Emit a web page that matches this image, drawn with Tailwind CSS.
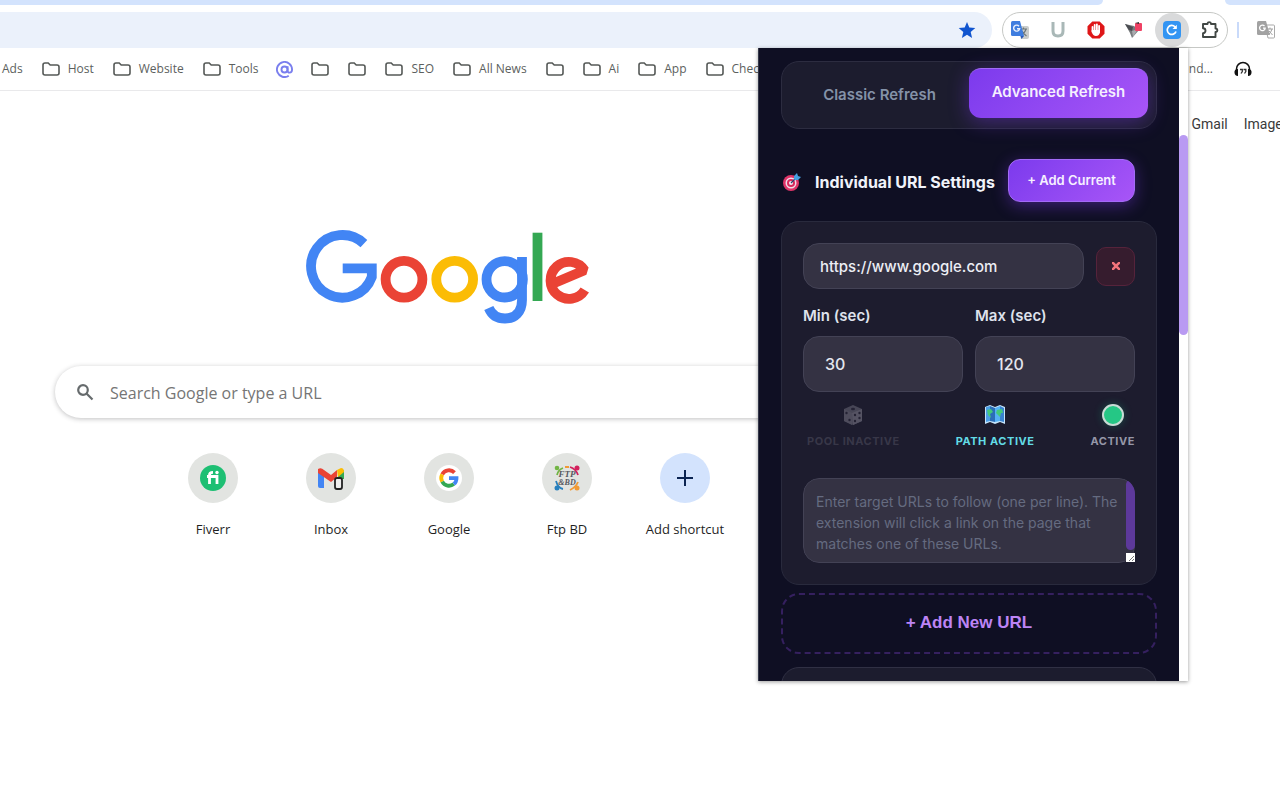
<!DOCTYPE html>
<html lang="en">
<head>
<meta charset="utf-8">
<meta name="viewport" content="width=device-width, initial-scale=1">
<title>New Tab</title>
<script src="https://cdn.jsdelivr.net/npm/@tailwindcss/browser@4"></script>
</head>
<body class="relative min-h-screen overflow-hidden bg-white font-['Open_Sans',sans-serif] text-[#1f1f1f]">
<svg class="hidden" aria-hidden="true">
  <symbol id="folder" viewBox="0 0 18 14"><path d="M1 3Q1 1 3 1H6.2L8.2 3H15Q17 3 17 5V11Q17 13 15 13H3Q1 13 1 11Z" fill="none" stroke="#555957" stroke-width="1.6"/></symbol>
</svg>

<!-- Browser chrome -->
<header>
  <div class="flex h-[5px] bg-white">
    <div class="flex-1 rounded-br-lg bg-[#d3e3fd]"></div>
    <div class="w-[122px]"></div>
    <div class="w-[55px] rounded-bl-lg bg-[#d3e3fd]"></div>
  </div>
  <div class="mt-[7px] flex h-9 items-center">
    <div class="flex h-9 flex-1 items-center justify-end rounded-r-full bg-[#ebf1fb] pr-4">
      <button aria-label="Bookmark this tab" class="block"><svg class="block size-[18px]" viewBox="0 0 18 18"><path d="M9 1L11.3 6.6L17.3 7.1L12.7 11L14.1 17L9 13.8L3.9 17L5.3 11L.7 7.1L6.7 6.6Z" fill="#1155cf"/></svg></button>
    </div>
    <div class="ml-[10px] flex h-9 w-[226px] items-center rounded-full border border-[#c6c8c5] pl-1">
      <button aria-label="Translate" class="mr-3 grid w-[26px] place-items-center"><svg class="size-[18px]" viewBox="0 0 18 18"><path d="M7 5H16Q18 5 18 7V16Q18 18 16 18H10Z" fill="#c9cccb"/><path d="M9 8H16M12.5 6.5V8M15 8Q14 12 9.5 14.500M11 10Q12.500 13 15.500 15" stroke="#6c7679" stroke-width="1.200" fill="none"/><path d="M1.500 0H9L13 15H1.500Q0 15 0 13.500V1.500Q0 0 1.500 0Z" fill="#3f7ddf"/><path d="M9.500 15H13L10.500 18Z" fill="#2856b5"/><path d="M8 5.200A3 3 0 1 0 8.600 7.800H6" stroke="#e8effc" stroke-width="1.400" fill="none"/></svg></button>
      <button aria-label="U extension" class="mr-3 grid w-[26px] place-items-center"><svg class="h-4 w-[14px]" viewBox="0 0 14 16"><path d="M2 0V9Q2 14 7 14T12 9V0" fill="none" stroke="#a9b8b7" stroke-width="3"/></svg></button>
      <button aria-label="Ad blocker" class="mr-3 grid w-[26px] place-items-center"><svg class="size-[18px]" viewBox="0 0 18 18"><path d="M5.300 .5H12.700L17.500 5.300V12.700L12.700 17.500H5.300L.5 12.700V5.300Z" fill="#df1618"/><path d="M5.500 6V10.500M7.700 3.800V10M9.900 3.300V10M12.100 4.800V11" stroke="#fff" stroke-width="1.800" stroke-linecap="round"/><path d="M4.700 9H13V11Q12.500 15 8.900 15Q6 15 4.700 11Z" fill="#fff"/></svg></button>
      <button aria-label="Fox extension" class="mr-3 grid w-[26px] place-items-center"><svg class="h-4 w-[18px]" viewBox="0 0 18 16"><path d="M0 2L9 4L14 8L7 16L5 11Z" fill="#777b7e"/><path d="M0 2L8 5L7 9L4 8Z" fill="#4b4d51"/><path d="M7 9L13 7L8 15Z" fill="#a9abae"/><rect x="10" y="1" width="7" height="8" rx="1" fill="#ef4164"/><path d="M10 1L14 0V2Z" fill="#333"/></svg></button>
      <button aria-label="Auto refresh" class="mr-1 -ml-1 grid size-[34px] place-items-center rounded-full bg-[#d9dadb]"><svg class="size-[18px]" viewBox="0 0 18 18"><rect width="18" height="18" rx="4" fill="#3395f3"/><path d="M13 10.500A4.500 4.500 0 1 1 12 5.800L13 6.800" fill="none" stroke="#fff" stroke-width="1.700"/><path d="M13.800 3.700V8H9.500Z" fill="#fff"/></svg></button>
      <button aria-label="Extensions" class="ml-1 grid w-[26px] place-items-center"><svg class="size-5" viewBox="0 0 20 20"><path d="M3 4H7.500V3.500A1.800 1.800 0 0 1 11 3.500V4H15.500V8.500H16A1.800 1.800 0 0 1 16 12H15.500V17H3V13.200A2.500 2.500 0 0 0 3 8.200Z" fill="none" stroke="#414744" stroke-width="1.900" stroke-linejoin="round"/></svg></button>
    </div>
    <div class="ml-[9px] h-4 w-[2px] bg-[#c9dafa]"></div>
    <button aria-label="Page translation" class="mr-[5px] ml-[18px]"><svg class="block size-[18px]" viewBox="0 0 18 18"><path d="M8 4H16.500Q17.500 4 17.500 5V16Q17.500 17 16.500 17H11Z" fill="#fff" stroke="#a9a9a9"/><path d="M10 8H16M13 6.500V8M15 8Q14 12 11 14M12 10L15.500 14" stroke="#a0a0a0" fill="none"/><path d="M1.500 0H9L13 14H1.500Q0 14 0 12.500V1.500Q0 0 1.500 0Z" fill="#a2a2a2"/><path d="M7.500 5A2.800 2.800 0 1 0 8.200 7.200H6" stroke="#fff" stroke-width="1.300" fill="none"/></svg></button>
  </div>
  <nav aria-label="Bookmarks" class="flex h-[42px] items-center justify-between overflow-hidden pr-7 pl-[2px] text-xs whitespace-nowrap text-[#5c5f5e]">
    <div class="flex items-center gap-[19px]">
      <a href="#">Ads</a>
      <a href="#" class="flex items-center gap-2"><svg class="h-[14px] w-[18px]"><use href="#folder"/></svg>Host</a>
      <a href="#" class="flex items-center gap-2"><svg class="h-[14px] w-[18px]"><use href="#folder"/></svg>Website</a>
      <a href="#" class="flex items-center gap-2"><svg class="h-[14px] w-[18px]"><use href="#folder"/></svg>Tools</a>
      <a href="#" aria-label="Mail" class="-mx-px"><svg class="size-[17px]" viewBox="0 0 18 18" fill="none" stroke="#7a7fee" stroke-width="2"><circle cx="9" cy="9" r="3.200"/><path d="M12.300 5.500V10Q12.300 12.300 14.300 12.300Q17 12.300 17 9A8 8 0 1 0 13.500 15.600"/></svg></a>
      <a href="#" aria-label="Folder"><svg class="h-[14px] w-[18px]"><use href="#folder"/></svg></a>
      <a href="#" aria-label="Folder"><svg class="h-[14px] w-[18px]"><use href="#folder"/></svg></a>
      <a href="#" class="flex items-center gap-2"><svg class="h-[14px] w-[18px]"><use href="#folder"/></svg>SEO</a>
      <a href="#" class="flex items-center gap-2"><svg class="h-[14px] w-[18px]"><use href="#folder"/></svg>All News</a>
      <a href="#" aria-label="Folder"><svg class="h-[14px] w-[18px]"><use href="#folder"/></svg></a>
      <a href="#" class="flex items-center gap-2"><svg class="h-[14px] w-[18px]"><use href="#folder"/></svg>Ai</a>
      <a href="#" class="flex items-center gap-2"><svg class="h-[14px] w-[18px]"><use href="#folder"/></svg>App</a>
      <a href="#" class="flex items-center gap-2"><svg class="h-[14px] w-[18px]"><use href="#folder"/></svg>Chec</a>
    </div>
    <div class="flex items-center gap-[21px]">
      <a href="#">nd...</a>
      <a href="#" aria-label="Music"><svg class="h-4 w-[18px]" viewBox="0 0 18 16"><path d="M2.500 11V8A6.500 6.500 0 0 1 15.500 8V11" fill="none" stroke="#111" stroke-width="1.500"/><path d="M4 8Q0 8 .5 12Q1 15 4 15ZM14 8Q18 8 17.500 12Q17 15 14 15Z" fill="#111"/><path d="M6 8.500H8.300V10.500L7 12.500M9.500 8.500H11.800V10.500L10.500 12.500" fill="none" stroke="#333" stroke-width="1.300"/></svg></a>
    </div>
  </nav>
  <div class="h-px bg-[#e9e9eb]"></div>
</header>

<!-- New tab page -->
<nav aria-label="Google" class="-mr-[10px] flex h-[66px] items-center justify-end gap-4 font-[Roboto,sans-serif] text-sm text-[#3a3a3a]">
  <a href="#">Gmail</a><a href="#">Images</a>
</nav>
<main class="flex w-[70%] flex-col items-center">
  <svg role="img" aria-label="Google" class="mt-[72px] h-24 w-[287px]" viewBox="305 229 287 96" fill="none" stroke-width="9.800">
    <path d="M363.900 243.600A31.300 31.300 0 1 0 371.800 277V268.300H342.700" stroke="#4285f4"/>
    <circle cx="404" cy="279.300" r="18.400" stroke="#ea4335"/>
    <circle cx="454.700" cy="279.300" r="18.400" stroke="#fbbc05"/>
    <circle cx="504.700" cy="279.300" r="18.200" stroke="#4285f4"/>
    <path d="M522 257V300C522 312 515 318.500 505 318.500C497 318.500 491.500 314.500 488.800 308" stroke="#4285f4"/>
    <path d="M537.500 232.700V301" stroke="#34a853"/>
    <path d="M584.800 290A18.500 18.500 0 1 1 584.500 270.200L555 282.800" stroke="#ea4335" stroke-linejoin="bevel"/>
  </svg>
  <form class="mt-[41px] flex h-[52px] w-full max-w-[786px] items-center rounded-full bg-white pl-[21px] shadow-[0_1px_5px_rgba(32,33,36,0.28)]">
    <svg class="size-[18px]" viewBox="0 0 18 18" fill="none" stroke="#666b6d" stroke-width="2.200"><circle cx="7" cy="7" r="4.800"/><path d="M10.500 10.500L16.500 16.500"/></svg>
    <input aria-label="Search" placeholder="Search Google or type a URL" class="ml-4 flex-1 pt-0.5 text-base outline-none placeholder:text-[#757575]">
  </form>
  <div class="mt-[35px] flex pl-0.5 text-[13px]">
    <a href="#" class="flex w-[118px] flex-col items-center gap-[17px]"><span class="grid size-[50px] place-items-center rounded-full bg-[#e2e4e1]"><svg class="size-[26px]" viewBox="0 0 26 26"><circle cx="13" cy="13" r="13" fill="#1dbf73"/><path d="M9.500 19V10Q9.500 7.300 13 7.300M7 11.500H17V19" fill="none" stroke="#fff" stroke-width="2.800"/><circle cx="17" cy="7.500" r="1.700" fill="#fff"/></svg></span>Fiverr</a>
    <a href="#" class="flex w-[118px] flex-col items-center gap-[17px]"><span class="grid size-[50px] place-items-center rounded-full bg-[#e2e4e1]"><svg class="size-[28px]" viewBox="0 0 28 28"><path d="M1 6L7 10V24H3Q1 24 1 22Z" fill="#4285f4"/><path d="M21 10L27 6V15H21Z" fill="#34a853"/><path d="M20 6L24 4Q27 4 27 8L21 13Z" fill="#fbbc04"/><path d="M1 5Q4 3 7 6L14 11L20 6V13L14 18L1 9Z" fill="#ea4335"/><rect x="18" y="14" width="7" height="11" rx="2" fill="#eee" stroke="#222" stroke-width="1.800"/></svg></span>Inbox</a>
    <a href="#" class="flex w-[118px] flex-col items-center gap-[17px]"><span class="grid size-[50px] place-items-center rounded-full bg-[#e2e4e1]"><svg class="size-[26px]" viewBox="0 0 26 26" fill="none" stroke-width="3.800"><circle cx="13" cy="13" r="13" fill="#fff"/><path d="M18.500 7.600A7.700 7.700 0 0 0 6.200 9.300" stroke="#ea4335"/><path d="M6.200 9.300A7.700 7.700 0 0 0 6.200 16.700" stroke="#fbbc05"/><path d="M6.200 16.700A7.700 7.700 0 0 0 17.800 19" stroke="#34a853"/><path d="M17.800 19Q20.500 17 20.500 13.200H13" stroke="#4285f4"/></svg></span>Google</a>
    <a href="#" class="flex w-[118px] flex-col items-center gap-[17px]"><span class="grid size-[50px] place-items-center rounded-full bg-[#e2e4e1]"><svg class="size-[26px]" viewBox="0 0 26 26" fill="none" stroke-width="1.800"><path d="M3 10Q4 5 9 3" stroke="#72b545"/><path d="M16 2Q22 4 24 10" stroke="#d3215d"/><path d="M2 16Q4 23 9 24" stroke="#2880be"/><path d="M16 25Q22 22 24 17M11 2H15" stroke="#f09a35"/><circle cx="3" cy="3" r="2.300" fill="#72b545"/><circle cx="23" cy="3" r="2.500" fill="#d3215d"/><circle cx="3" cy="23" r="2.500" fill="#2880be"/><circle cx="23" cy="23" r="2.500" fill="#f09a35"/><text x="13" y="12" text-anchor="middle" font-family="Liberation Serif" font-size="9" font-weight="700" font-style="italic" fill="#565860">FTP</text><text x="13" y="20" text-anchor="middle" font-family="Liberation Serif" font-size="8" font-weight="700" font-style="italic" fill="#565860">&amp;BD</text></svg></span>Ftp BD</a>
    <button class="flex w-[118px] flex-col items-center gap-[17px]"><span class="grid size-[50px] place-items-center rounded-full bg-[#d3e3fd]"><svg class="size-4" viewBox="0 0 16 16"><path d="M8 0V16M0 8H16" stroke="#0b2452" stroke-width="2"/></svg></span>Add shortcut</button>
  </div>
</main>

<!-- Extension popup -->
<section aria-label="Refresh extension" class="absolute top-12 right-[92px] flex h-[633px] w-[430px] overflow-hidden bg-white font-[Inter,sans-serif] shadow-[0_1px_4px_rgba(0,0,0,0.4)]">
  <div class="flex-1 overflow-hidden border-l border-[#34384a] bg-[#0f0f23] px-[22px] pt-[13px]">
    <div class="flex rounded-[18px] border border-[#2c2c40] bg-[#1c1c2e] p-2">
      <button class="h-[50px] flex-1 text-[15px] font-semibold text-[#8492a8]">Classic Refresh</button>
      <button class="h-[50px] flex-1 -translate-y-0.5 rounded-xl border-t border-[#a16bf7] bg-linear-135 from-[#7c3aed] to-[#a855f7] pb-0.5 text-[15px] font-semibold text-[#f5efff] shadow-[0_4px_20px_rgba(124,58,237,0.4)]">Advanced Refresh</button>
    </div>

    <div class="mt-[30px] flex items-center justify-between pr-[22px] pl-[2px]">
      <div class="flex items-center gap-[14px] pt-0.5">
        <svg class="size-[18px]" viewBox="0 0 18 18"><circle cx="8" cy="10" r="8" fill="#df3468"/><circle cx="8" cy="10" r="5.500" fill="#efdce9"/><circle cx="8" cy="10" r="4" fill="#d9295c"/><circle cx="8" cy="10" r="2" fill="#f6e7ef"/><path d="M8 10L14 4" stroke="#28436e" stroke-width="1.300"/><path d="M11 6V3L14 0L15 3L18 4L15 7H12Z" fill="#459fe0"/></svg>
        <h2 class="text-base font-bold whitespace-nowrap text-[#f1f3fa]">Individual URL Settings</h2>
      </div>
      <button class="h-[43px] w-[127px] rounded-xl border border-[#a36bf7] bg-linear-135 from-[#7c3aed] to-[#a855f7] text-[13px] font-semibold whitespace-nowrap text-[#f6f0ff] shadow-[0_4px_16px_rgba(124,58,237,0.4)]">+ Add Current</button>
    </div>

    <div class="mt-[19px] rounded-[18px] border border-[#292a3d] bg-[#1d1c2e] p-[21px]">
      <div class="flex items-center gap-3">
        <input aria-label="URL" value="https://www.google.com" class="h-[46px] min-w-0 flex-1 rounded-2xl border border-[#434255] bg-[#343243] px-4 text-[15px] font-medium text-[#eceef5]">
        <button aria-label="Remove URL" class="grid size-[39px] place-items-center rounded-[10px] border border-[#56233b] bg-[#361c2e]"><svg class="size-2" viewBox="0 0 8 8"><path d="M0 0L8 8M8 0L0 8" stroke="#f2747c" stroke-width="2.600"/></svg></button>
      </div>
      <div class="mt-4 grid grid-cols-2 gap-3 text-base">
        <label class="font-medium text-[#dfe2ec]"><span class="block text-[15px] leading-[22px] font-semibold">Min (sec)</span><input value="30" class="mt-[9px] h-14 w-full rounded-2xl border border-[#434255] bg-[#343243] px-[21px] text-[#e4e6ef]"></label>
        <label class="font-medium text-[#dfe2ec]"><span class="block text-[15px] leading-[22px] font-semibold">Max (sec)</span><input value="120" class="mt-[9px] h-14 w-full rounded-2xl border border-[#434255] bg-[#343243] px-[21px] text-[#e4e6ef]"></label>
      </div>
      <div class="mt-3 flex justify-between pl-1 text-[11px] leading-4 font-bold">
        <button class="flex flex-col items-center gap-[7px] tracking-wider text-[#383748]"><svg class="h-[22px] w-5" viewBox="0 0 20 22"><path d="M10 1L19 5V17L10 21L1 17V5Z" fill="#474656"/><path d="M1 5L9 9V21L1 17Z" fill="#4e4c5c"/><path d="M9 9L19 5V17L10 21Z" fill="#555363"/><g fill="#242234"><ellipse cx="10" cy="5" rx="2" ry="1.200"/><circle cx="3.500" cy="9" r="1.200"/><circle cx="6.500" cy="16" r="1.200"/><circle cx="12" cy="11" r="1.200"/><circle cx="16.500" cy="9" r="1.200"/><circle cx="12" cy="17" r="1.200"/><circle cx="16.500" cy="14" r="1.200"/></g></svg>POOL INACTIVE</button>
        <button class="flex flex-col items-center gap-[7px] tracking-wider text-[#63dce7]"><svg class="h-[22px] w-[22px]" viewBox="0 0 22 22"><path d="M1 3L6 1L11 3L16 1L21 3V20L16 18L11 20L6 18L1 20Z" fill="#c6e4fa"/><path d="M2 3L6 2V17L2 18Z" fill="#4a9ee6"/><path d="M6 2L11 4V18L6 17Z" fill="#2b6eb8"/><path d="M11 4L16 2V17L11 18Z" fill="#55b1f4"/><path d="M16 2L20 4V18L16 17Z" fill="#3883d0"/><path d="M3 6L7 5L9 8L6 10L7 14L4 11ZM13 6L18 5L19 9L17 9L16 13L14 11L12 9Z" fill="#43c97c"/></svg>PATH ACTIVE</button>
        <button class="flex flex-col items-center gap-[7px] tracking-wider text-[#9697a8]"><span class="size-[22px] rounded-full border-2 border-[#c9dbd5] bg-[#25c785] shadow-[0_0_8px_rgba(16,185,129,0.3)]"></span>ACTIVE</button>
      </div>
      <div class="relative mt-[29px] overflow-hidden rounded-2xl">
        <textarea aria-label="Target URLs" placeholder="Enter target URLs to follow (one per line). The extension will click a link on the page that matches one of these URLs." class="block h-[85px] w-full resize-none overflow-hidden rounded-2xl border border-[#434255] bg-[#343243] py-3 pr-2 pl-3 text-sm leading-[21px] placeholder:text-[#656b80]"></textarea>
        <span class="absolute top-0.5 right-0 h-[70px] w-[9px] rounded-full bg-[#5d399b]"></span>
      </div>
      <div class="relative"><svg class="absolute right-0 bottom-px size-[9px] bg-white" viewBox="0 0 9 9"><path d="M3 8L8 3M6 8L8 6" stroke="#777"/></svg></div>
    </div>

    <button class="mt-2 h-[61px] w-full rounded-[18px] border-2 border-dashed border-[#35205f] pb-0.5 font-['Liberation_Sans',sans-serif] text-[17px] font-bold text-[#bd84f5]">+ Add New URL</button>
    <div class="mt-[13px] h-10 rounded-[18px] border border-[#303044] bg-[#1c1c2e]"></div>
  </div>
  <div class="w-[9px] bg-white pt-[87px]"><div class="h-[200px] rounded-full bg-[#b99af2]"></div></div>
</section>
</body>
</html>
